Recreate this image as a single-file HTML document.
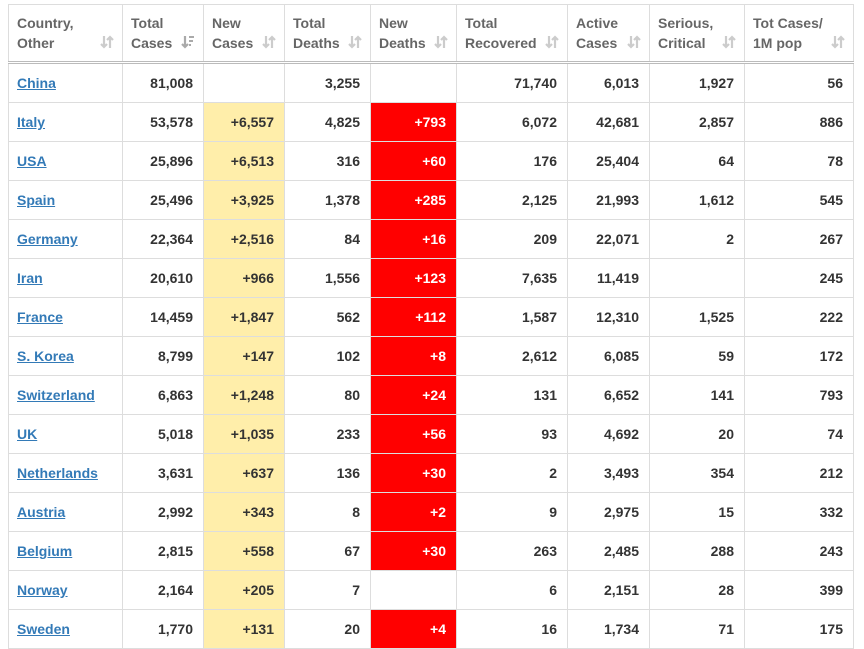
<!DOCTYPE html>
<html><head><style>
body{margin:0;background:#fff;font-family:"Liberation Sans",Arial,sans-serif;}
table{position:absolute;left:8px;top:4px;border-collapse:collapse;table-layout:fixed;width:846px;}
td,th{border:1px solid #ddd;padding:0 10px 0 8px;font-size:14px;font-weight:bold;color:#333;text-align:right;height:38px;}
th{color:#666;text-align:left;height:56px;line-height:20px;position:relative;vertical-align:middle;border-bottom:3px double #bbb;}
th svg{position:absolute;right:8px;bottom:12px;}
td:first-child{text-align:left;}
a{color:#337ab7;text-decoration:underline;}
.y{background:#ffeeaa;}
.r{background:#f00;color:#fff;}
</style></head><body>
<table>
<colgroup><col style="width:114px"><col style="width:81px"><col style="width:81px"><col style="width:86px"><col style="width:86px"><col style="width:111px"><col style="width:82px"><col style="width:95px"><col style="width:109px"></colgroup>
<tr>
<th>Country,<br>Other<svg width="14" height="14" viewBox="0 0 14 14"><path d="M4 1v11M1 9l3 3 3-3M10 13V2M7 5l3-3 3 3" stroke="#ccc" stroke-width="2.2" fill="none"/></svg></th>
<th>Total<br>Cases<svg width="14" height="14" viewBox="0 0 14 14"><path d="M4 1v11M1 9l3 3 3-3" stroke="#aaa" stroke-width="2.2" fill="none"/><path d="M8 2h5M8 6h4M8 10h2" stroke="#aaa" stroke-width="2"/></svg></th>
<th>New<br>Cases<svg width="14" height="14" viewBox="0 0 14 14"><path d="M4 1v11M1 9l3 3 3-3M10 13V2M7 5l3-3 3 3" stroke="#ccc" stroke-width="2.2" fill="none"/></svg></th>
<th>Total<br>Deaths<svg width="14" height="14" viewBox="0 0 14 14"><path d="M4 1v11M1 9l3 3 3-3M10 13V2M7 5l3-3 3 3" stroke="#ccc" stroke-width="2.2" fill="none"/></svg></th>
<th>New<br>Deaths<svg width="14" height="14" viewBox="0 0 14 14"><path d="M4 1v11M1 9l3 3 3-3M10 13V2M7 5l3-3 3 3" stroke="#ccc" stroke-width="2.2" fill="none"/></svg></th>
<th>Total<br>Recovered<svg width="14" height="14" viewBox="0 0 14 14"><path d="M4 1v11M1 9l3 3 3-3M10 13V2M7 5l3-3 3 3" stroke="#ccc" stroke-width="2.2" fill="none"/></svg></th>
<th>Active<br>Cases<svg width="14" height="14" viewBox="0 0 14 14"><path d="M4 1v11M1 9l3 3 3-3M10 13V2M7 5l3-3 3 3" stroke="#ccc" stroke-width="2.2" fill="none"/></svg></th>
<th>Serious,<br>Critical<svg width="14" height="14" viewBox="0 0 14 14"><path d="M4 1v11M1 9l3 3 3-3M10 13V2M7 5l3-3 3 3" stroke="#ccc" stroke-width="2.2" fill="none"/></svg></th>
<th>Tot Cases/<br>1M pop<svg width="14" height="14" viewBox="0 0 14 14"><path d="M4 1v11M1 9l3 3 3-3M10 13V2M7 5l3-3 3 3" stroke="#ccc" stroke-width="2.2" fill="none"/></svg></th>
</tr>
<tr><td><a>China</a></td><td>81,008</td><td></td><td>3,255</td><td></td><td>71,740</td><td>6,013</td><td>1,927</td><td>56</td></tr>
<tr><td><a>Italy</a></td><td>53,578</td><td class="y">+6,557</td><td>4,825</td><td class="r">+793</td><td>6,072</td><td>42,681</td><td>2,857</td><td>886</td></tr>
<tr><td><a>USA</a></td><td>25,896</td><td class="y">+6,513</td><td>316</td><td class="r">+60</td><td>176</td><td>25,404</td><td>64</td><td>78</td></tr>
<tr><td><a>Spain</a></td><td>25,496</td><td class="y">+3,925</td><td>1,378</td><td class="r">+285</td><td>2,125</td><td>21,993</td><td>1,612</td><td>545</td></tr>
<tr><td><a>Germany</a></td><td>22,364</td><td class="y">+2,516</td><td>84</td><td class="r">+16</td><td>209</td><td>22,071</td><td>2</td><td>267</td></tr>
<tr><td><a>Iran</a></td><td>20,610</td><td class="y">+966</td><td>1,556</td><td class="r">+123</td><td>7,635</td><td>11,419</td><td></td><td>245</td></tr>
<tr><td><a>France</a></td><td>14,459</td><td class="y">+1,847</td><td>562</td><td class="r">+112</td><td>1,587</td><td>12,310</td><td>1,525</td><td>222</td></tr>
<tr><td><a>S. Korea</a></td><td>8,799</td><td class="y">+147</td><td>102</td><td class="r">+8</td><td>2,612</td><td>6,085</td><td>59</td><td>172</td></tr>
<tr><td><a>Switzerland</a></td><td>6,863</td><td class="y">+1,248</td><td>80</td><td class="r">+24</td><td>131</td><td>6,652</td><td>141</td><td>793</td></tr>
<tr><td><a>UK</a></td><td>5,018</td><td class="y">+1,035</td><td>233</td><td class="r">+56</td><td>93</td><td>4,692</td><td>20</td><td>74</td></tr>
<tr><td><a>Netherlands</a></td><td>3,631</td><td class="y">+637</td><td>136</td><td class="r">+30</td><td>2</td><td>3,493</td><td>354</td><td>212</td></tr>
<tr><td><a>Austria</a></td><td>2,992</td><td class="y">+343</td><td>8</td><td class="r">+2</td><td>9</td><td>2,975</td><td>15</td><td>332</td></tr>
<tr><td><a>Belgium</a></td><td>2,815</td><td class="y">+558</td><td>67</td><td class="r">+30</td><td>263</td><td>2,485</td><td>288</td><td>243</td></tr>
<tr><td><a>Norway</a></td><td>2,164</td><td class="y">+205</td><td>7</td><td></td><td>6</td><td>2,151</td><td>28</td><td>399</td></tr>
<tr><td><a>Sweden</a></td><td>1,770</td><td class="y">+131</td><td>20</td><td class="r">+4</td><td>16</td><td>1,734</td><td>71</td><td>175</td></tr>
</table>
</body></html>
